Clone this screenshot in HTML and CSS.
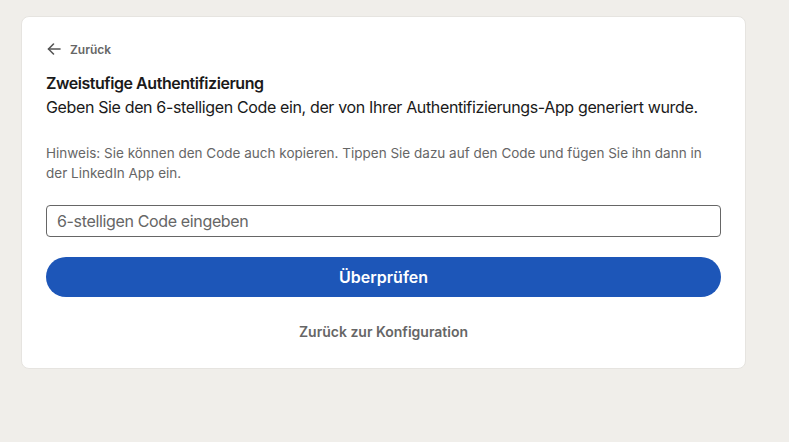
FILE: index.html
```html
<!doctype html>
<html lang="de">
 <head>
  <meta charset="UTF-8">
  <title>Zweistufige Authentifizierung</title>
  <link rel="stylesheet" href="styles.css">
 </head>
 <body>
  <div class="card">
   <a class="back" href="#">
    <svg width="16" height="16" viewBox="0 0 16 16" fill="none" stroke="currentColor" stroke-width="1.6" stroke-linecap="round" stroke-linejoin="round">
     <path d="M14 8H2.5"/>
     <path d="M7.5 3 2.5 8l5 5"/>
    </svg>
    <span>Zurück</span>
   </a>

   <h1 class="tit">Zweistufige Authentifizierung</h1>
   <p class="sub">Geben Sie den 6-stelligen Code ein, der von Ihrer Authentifizierungs-App generiert wurde.</p>

   <p class="hint">Hinweis: Sie können den Code auch kopieren. Tippen Sie dazu auf den Code und fügen Sie ihn dann in der LinkedIn App ein.</p>

   <input class="code" type="text" placeholder="6-stelligen Code eingeben">
   <button class="btn" type="button">Überprüfen</button>

   <a class="conf" href="#">Zurück zur Konfiguration</a>
  </div>
 </body>
</html>
```

FILE: styles.css
```css
/* 전체 */
body {
margin: 0;
background: #f0eeea;
font-family: Inter, "Noto Sans", sans-serif;
color: #1a1a1a;
}

.card {
width: 725px;
box-sizing: border-box;
margin: 16px 0 0 21px;
padding: 20px 24px 26px;
background: #fff;
border: 1px solid #e6e4e0;
border-radius: 8px;
display: flex;
flex-direction: column;
}

/* 뒤로 */
.back {
display: flex;
align-items: center;
gap: 8px;
height: 24px;
color: #666;
text-decoration: none;
font-size: 12px;
font-weight: 600;
}

.back svg {
color: #555;
}

.tit {
margin: 10px 0 0;
font-size: 16px;
line-height: 24px;
font-weight: 600;
letter-spacing: -0.45px;
color: #1a1a1a;
}

.sub {
margin: 0;
font-size: 16px;
line-height: 24px;
letter-spacing: -0.36px;
}

.hint {
margin: 24px 0 0;
font-size: 13.5px;
line-height: 20px;
color: #666;
}

.code {
margin-top: 22px;
height: 32px;
box-sizing: border-box;
padding: 0 10px;
border: 1px solid #666;
border-radius: 4px;
font-family: inherit;
font-size: 16px;
letter-spacing: -0.35px;
}

.code::placeholder {
color: #666;
}

.btn {
margin-top: 20px;
height: 40px;
border: 0;
border-radius: 20px;
background: #1d56b8;
color: #fff;
font-family: inherit;
font-size: 16px;
font-weight: 600;
}

.conf {
margin-top: 25px;
align-self: center;
line-height: 20px;
font-size: 14px;
font-weight: 600;
color: #666;
text-decoration: none;
}
```
